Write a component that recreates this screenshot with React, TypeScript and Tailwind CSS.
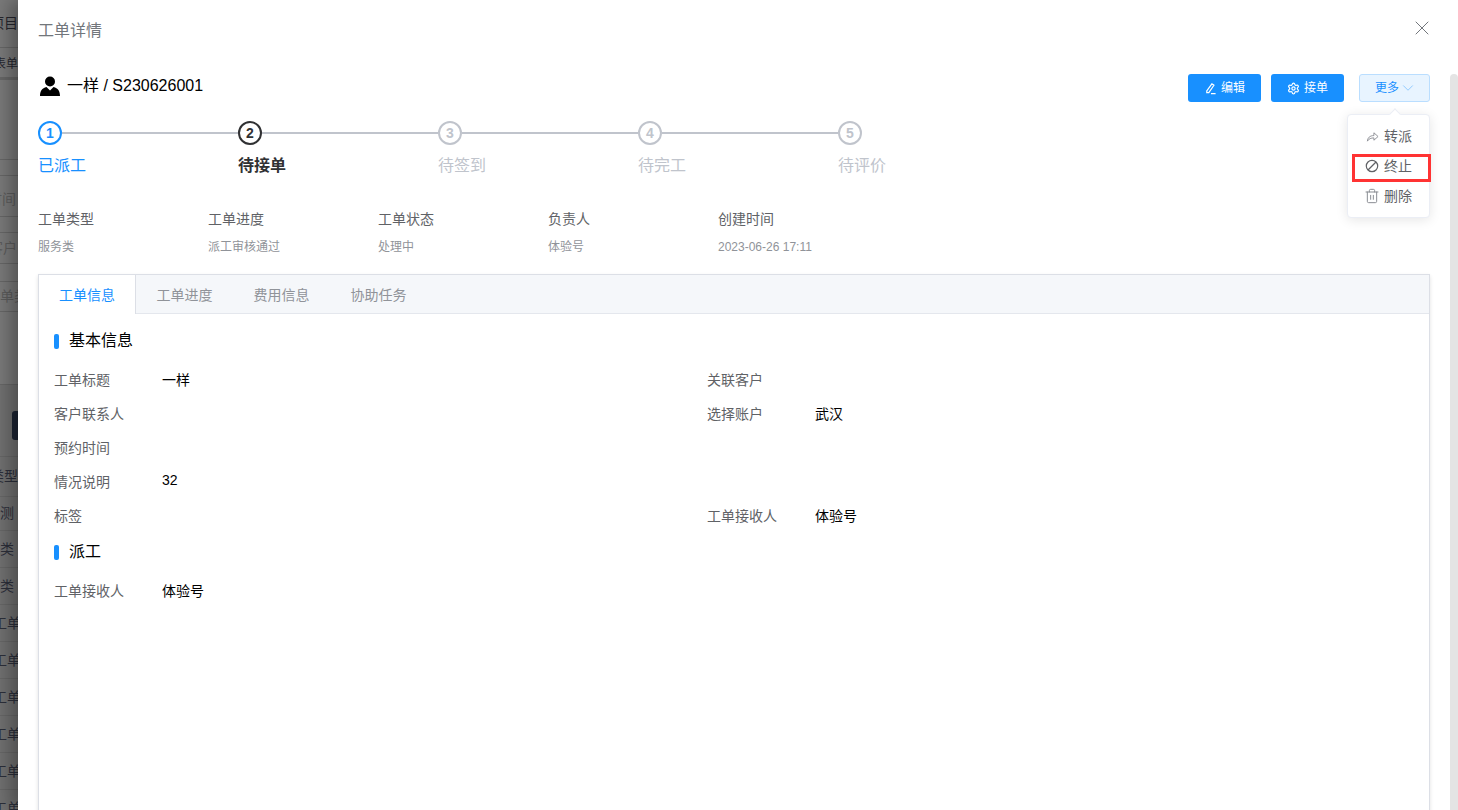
import React from 'react';
import { X, ChevronDown, Trash2, Settings } from 'lucide-react';

const sans = 'font-["Liberation_Sans","Noto_Sans_CJK_SC",sans-serif]';

const steps = [
  { n: 1, label: '已派工', state: 'done' },
  { n: 2, label: '待接单', state: 'active' },
  { n: 3, label: '待签到', state: 'todo' },
  { n: 4, label: '待完工', state: 'todo' },
  { n: 5, label: '待评价', state: 'todo' },
];

const summary = [
  ['工单类型', '服务类'],
  ['工单进度', '派工审核通过'],
  ['工单状态', '处理中'],
  ['负责人', '体验号'],
  ['创建时间', '2023-06-26 17:11'],
];

// the page behind the drawer, only its left 18px shows
const backdropRows = [
  { h: 'h-[48px]', text: '项目', cls: 'text-[#26262e] -ml-[10px]' },
  { h: 'h-[32px] border-b-[3px] pt-[3px]', text: '表单', cls: 'text-[12px] text-[#26262e] -ml-[6px]' },
  { h: 'h-[80px]', text: '', cls: '' },
  { h: 'h-[16px]', text: '', cls: '' },
  { h: 'h-[41px] pt-[6px]', text: '时间', cls: 'text-[#5c5c5c] -ml-[12px]' },
  { h: 'h-[16px]', text: '', cls: '' },
  { h: 'h-[31px]', text: '客户', cls: 'text-[#5c5c5c] -ml-[11px]' },
  { h: 'h-[18px]', text: '', cls: '' },
  { h: 'h-[30px]', text: '单类', cls: 'text-[#5c5c5c] ml-0' },
  { h: 'h-[73px]', text: '', cls: '' },
];

const tableRows = [
  { h: 'h-[40px]', text: '类型', cls: '-ml-[10px]' },
  { h: 'h-[34px]', text: '测', cls: 'ml-0' },
  { h: 'h-[37px]', text: '类', cls: 'ml-0' },
  { h: 'h-[37px]', text: '类', cls: 'ml-0' },
  { h: 'h-[37px]', text: '工单', cls: '-ml-[7px]' },
  { h: 'h-[37px]', text: '工单', cls: '-ml-[7px]' },
  { h: 'h-[37px]', text: '工单', cls: '-ml-[7px]' },
  { h: 'h-[37px]', text: '工单', cls: '-ml-[7px]' },
  { h: 'h-[37px]', text: '工单', cls: '-ml-[7px]' },
  { h: 'h-[37px]', text: '工单', cls: '-ml-[7px]' },
];

function Backdrop() {
  return (
    <div className="w-[18px] h-full shrink-0 overflow-hidden bg-[#797979] flex flex-col">
      {backdropRows.map((row, i) => (
        <div key={i} className={`${row.h} w-[18px] shrink-0 border-b border-[#666] flex items-center overflow-hidden text-[14px] whitespace-nowrap`}>
          {row.text && <span className={`shrink-0 ${row.cls}`}>{row.text}</span>}
        </div>
      ))}
      <div className="h-[72px] shrink-0 bg-[#707070] border-b border-[#666] flex items-start justify-end pt-[26px]">
        <div className="w-[6px] h-[29px] bg-[#1c2433] rounded-l-[3px]" />
      </div>
      {tableRows.map((row, i) => (
        <div key={i} className={`${row.h} w-[18px] shrink-0 border-b border-[#666] bg-[#707070] flex items-center overflow-hidden text-[14px] whitespace-nowrap text-[#2c2f3a]`}>
          <span className={`shrink-0 ${row.cls}`}>{row.text}</span>
        </div>
      ))}
    </div>
  );
}

function Step({ n, label, state, last }: { n: number; label: string; state: string; last?: boolean }) {
  const circle =
    state === 'done' ? 'border-[#1890ff] text-[#1890ff]' : state === 'active' ? 'border-[#303133] text-[#303133]' : 'border-[#c0c4cc] text-[#c0c4cc]';
  const text =
    state === 'done' ? 'text-[#1890ff] font-normal' : state === 'active' ? 'text-[#303133] font-bold' : 'text-[#c0c4cc] font-normal';
  return (
    <div className="w-[200px] shrink-0">
      <div className="flex items-center h-[24px]">
        <div className={`w-[24px] h-[24px] rounded-full border-2 bg-white flex items-center justify-center text-[14px] font-bold ${circle}`}>{n}</div>
        {!last && <div className="flex-1 h-[2px] bg-[#c0c4cc]" />}
      </div>
      <div className={`mt-[5px] text-[16px] leading-[32px] ${text}`}>{label}</div>
    </div>
  );
}

function Field({ label, value }: { label: string; value?: string }) {
  return (
    <div className="flex h-[34px] items-center text-[14px]">
      <div className="w-[108px] text-[#606266]">{label}</div>
      <div className="text-black">{value}</div>
    </div>
  );
}

function SectionTitle({ title }: { title: string }) {
  return (
    <div className="flex items-center gap-[10px] text-[16px] text-black h-[20px]">
      <div className="w-[5px] h-[15px] rounded-[2px] bg-[#1890ff]" />
      {title}
    </div>
  );
}

export default function App() {
  return (
    <div className={`w-[1458px] h-[810px] overflow-hidden flex bg-white ${sans}`}>
      <Backdrop />
      <div className="relative flex-1 min-w-0 h-full bg-white shadow-[-8px_0_16px_rgba(0,0,0,0.3)]">
        {/* vertical scrollbar */}
        <div className="absolute right-0 top-[74px] bottom-0 w-[8px] rounded-t-[4px] bg-[#e4e4e4]" />

        <div className="pl-[20px] pr-[28px]">
          <div className="flex items-center justify-between h-[60px] pt-[1px]">
            <div className="text-[16px] text-[#72767b]">工单详情</div>
            <X className="w-[24px] h-[24px] text-[#72767b] mb-[5px] mr-[-4px]" strokeWidth={1} />
          </div>

          <div className="flex justify-between items-start h-[60px]">
            <div className="flex items-center gap-[7px] text-[16px] text-black pl-[2px] h-[52px]">
              <svg viewBox="0 0 20 20" className="w-[20px] h-[20px]" fill="black">
                <circle cx="10" cy="5.5" r="5" />
                <path d="M0 20c0-5 2-8 6.5-9l3.500 3.500 3.500-3.500c4.500 1 6.500 4 6.500 9z" />
              </svg>
              <span>一样 / S230626001</span>
            </div>
            <div className="flex gap-[10px] pt-[14px]">
              <button className="flex items-center justify-center gap-[4px] w-[73px] h-[28px] rounded-[3px] bg-[#1890ff] text-white text-[12px]">
                <svg viewBox="0 0 14 14" className="w-[13px] h-[13px]" fill="none" stroke="white" strokeWidth="1.300">
                  <path d="M3 9.500 8.500 2l2.200 1.500L5.200 11.500H3zM7.500 12.500h5" />
                </svg>
                编辑
              </button>
              <button className="flex items-center justify-center gap-[4px] w-[73px] h-[28px] rounded-[3px] bg-[#1890ff] text-white text-[12px]">
                <Settings className="w-[13px] h-[13px]" strokeWidth={2.250} />
                接单
              </button>
              <div className="relative ml-[5px]">
                <button className="flex items-center justify-center w-[71px] h-[28px] rounded-[3px] pl-[3px] border border-[#badeff] bg-[#e8f4ff] text-[#1890ff] text-[12px]">
                  更多
                  <ChevronDown className="w-[18px] h-[18px] text-[#8cc8ff]" strokeWidth={1.25} />
                </button>
                {/* dropdown */}
                <div className="absolute right-0 top-[40px] w-[83px] h-[104px] rounded-[4px] border border-[#ebeef5] bg-white shadow-[0_2px_12px_rgba(0,0,0,0.1)] flex flex-col py-[6px] text-[14px] text-[#606266]">
                  <div className="absolute top-[-5px] right-[30px] w-[8px] h-[8px] rotate-45 bg-white border-l border-t border-[#ebeef5]" />
                  <div className="h-[30px] flex items-center justify-end pr-[17px] gap-[5px]">
                    <svg viewBox="0 0 14 14" className="w-[13px] h-[13px]" fill="none" stroke="#8a8d93" strokeWidth="1">
                      <path d="M1.500 12c.3-3.500 2.500-6 7-6V3l4.500 4-4.500 4V8.500C5.500 8.500 3 9.500 1.500 12z" strokeLinejoin="round" />
                    </svg>
                    转派
                  </div>
                  <div className="h-[30px] flex items-center justify-end pr-[17px] gap-[5px]">
                    <svg viewBox="0 0 14 14" className="w-[14px] h-[14px]" fill="none" stroke="#606266" strokeWidth="1.200">
                      <circle cx="7" cy="7" r="5.700" />
                      <path d="M3 11 11 3" />
                    </svg>
                    终止
                  </div>
                  <div className="h-[30px] flex items-center justify-end pr-[17px] gap-[4px]">
                    <Trash2 className="w-[16px] h-[16px] text-[#8a8d93]" strokeWidth={1.5} />
                    删除
                  </div>
                  {/* highlight drawn over the 终止 item */}
                  <div className="absolute left-[4px] top-[39px] w-[79px] h-[28px] border-[3px] border-[#ff3333]" />
                </div>
              </div>
            </div>
          </div>

          <div className="flex h-[73px] mt-[1px]">
            {steps.map((s, i) => (
              <Step key={s.n} n={s.n} label={s.label} state={s.state} last={i === steps.length - 1} />
            ))}
          </div>

          <div className="flex mt-[14px] h-[62px]">
            {summary.map(([k, v]) => (
              <div key={k} className="w-[170px]">
                <div className="text-[14px] leading-[20px] text-[#606266] mt-[1px]">{k}</div>
                <div className="text-[12px] leading-[18px] text-[#909399] mt-[9px]">{v}</div>
              </div>
            ))}
          </div>

          <div className="mt-[4px] h-[600px] border border-[#dcdfe6] shadow-[0_2px_4px_rgba(0,0,0,0.12)] bg-white">
            <div className="flex h-[39px] bg-[#f5f7fa] border-b border-[#e4e7ed] text-[14px] text-[#909399]">
              <div className="w-[97px] h-[39px] pt-[2px] bg-white border-r border-[#dcdfe6] text-[#1890ff] flex items-center justify-center">工单信息</div>
              <div className="w-[97px] pt-[2px] flex items-center justify-center">工单进度</div>
              <div className="w-[97px] pt-[2px] flex items-center justify-center">费用信息</div>
              <div className="w-[97px] pt-[2px] flex items-center justify-center">协助任务</div>
            </div>
            <div className="px-[15px] pt-[17px]">
              <SectionTitle title="基本信息" />
              <div className="grid grid-cols-[653px_1fr] mt-[12px]">
                <Field label="工单标题" value="一样" />
                <Field label="关联客户" />
                <Field label="客户联系人" />
                <Field label="选择账户" value="武汉" />
                <Field label="预约时间" />
                <div />
                <div className="flex h-[34px] text-[14px] items-center">
                  <div className="w-[108px] text-[#606266]">情况说明</div>
                  <div className="text-black -mt-[4px]">32</div>
                </div>
                <div />
                <Field label="标签" />
                <Field label="工单接收人" value="体验号" />
              </div>
              <div className="mt-[9px]"><SectionTitle title="派工" /></div>
              <div className="mt-[12px]">
                <Field label="工单接收人" value="体验号" />
              </div>
            </div>
          </div>
        </div>
      </div>
    </div>
  );
}
